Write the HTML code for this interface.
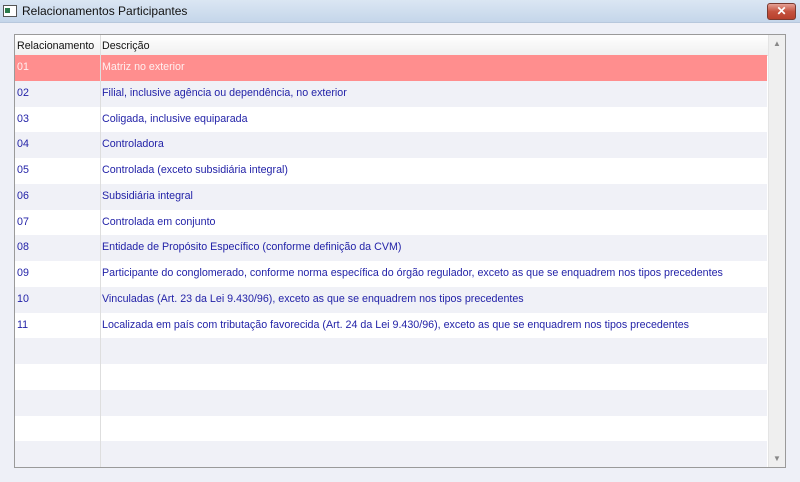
<!DOCTYPE html>
<html><head><style>
body{margin:0;width:800px;height:482px;background:#eef0f7;font-family:"Liberation Sans",sans-serif;font-size:10.7px;position:relative;overflow:hidden}
.title{position:absolute;left:0;top:0;width:800px;height:22px;background:linear-gradient(#dbe6f3,#c5d6ea);border-bottom:1px solid #b7c8dd}
.title span{position:absolute;left:22px;top:4px;font-size:12px;color:#111}
.ico{position:absolute;left:3px;top:5px;width:12px;height:10px;border:1px solid #555;background:#fff}
.ico:before{content:"";position:absolute;left:1px;top:2px;width:5px;height:5px;background:#2a7a4a}
.close{position:absolute;left:767px;top:3px;width:27px;height:15px;border-radius:3px;background:linear-gradient(#e5a196,#c5523e 50%,#b7402c);border:1px solid #7a3a30;color:#fff;font-weight:bold;text-align:center;line-height:15px;font-size:12px}
.grid{position:absolute;left:14px;top:34px;width:770px;height:432px;border:1px solid #9a9a9a;background:#fff;overflow:hidden}
.hdr{position:absolute;left:0;top:0;width:754px;height:20px;background:linear-gradient(#fff,#f0f0f0);border-bottom:1px solid #ddd}
.hdr div{position:absolute;top:5px;color:#111}
.row{position:absolute;left:0;width:752px;height:25.75px}
.row div{position:absolute;top:6px;color:#2323a8}
.c1{left:2px}.c2{left:87px}
.g{background:#f0f1f7}.w{background:#fff}
.sel{background:#ff8e8e}.sel div{color:#fff0f0}
.vline{position:absolute;left:85px;top:0;width:1px;height:432px;background:#dedede}
.sb{position:absolute;left:753px;top:0;width:17px;height:432px;background:#efefef;border-left:1px solid #e4e4e4}
.sb span{position:absolute;left:4px;color:#888;font-size:8px}
</style></head><body>
<div class="title"><div class="ico"></div><span>Relacionamentos Participantes</span></div>
<div class="close">✕</div>
<div class="grid">
<div class="hdr"><div style="left:2px">Relacionamento</div><div style="left:87px">Descrição</div></div>
<div class="row sel" style="top:20px"><div class="c1">01</div><div class="c2">Matriz no exterior</div></div>
<div class="row g" style="top:45.75px"><div class="c1">02</div><div class="c2">Filial, inclusive agência ou dependência, no exterior</div></div>
<div class="row w" style="top:71.5px"><div class="c1">03</div><div class="c2">Coligada, inclusive equiparada</div></div>
<div class="row g" style="top:97.25px"><div class="c1">04</div><div class="c2">Controladora</div></div>
<div class="row w" style="top:123px"><div class="c1">05</div><div class="c2">Controlada (exceto subsidiária integral)</div></div>
<div class="row g" style="top:148.75px"><div class="c1">06</div><div class="c2">Subsidiária integral</div></div>
<div class="row w" style="top:174.5px"><div class="c1">07</div><div class="c2">Controlada em conjunto</div></div>
<div class="row g" style="top:200.25px"><div class="c1">08</div><div class="c2">Entidade de Propósito Específico (conforme definição da CVM)</div></div>
<div class="row w" style="top:226px"><div class="c1">09</div><div class="c2">Participante do conglomerado, conforme norma específica do órgão regulador, exceto as que se enquadrem nos tipos precedentes</div></div>
<div class="row g" style="top:251.75px"><div class="c1">10</div><div class="c2">Vinculadas (Art. 23 da Lei 9.430/96), exceto as que se enquadrem nos tipos precedentes</div></div>
<div class="row w" style="top:277.5px"><div class="c1">11</div><div class="c2">Localizada em país com tributação favorecida (Art. 24 da Lei 9.430/96), exceto as que se enquadrem nos tipos precedentes</div></div>
<div class="row g" style="top:303.25px"></div>
<div class="row w" style="top:329px"></div>
<div class="row g" style="top:354.75px"></div>
<div class="row w" style="top:380.5px"></div>
<div class="row g" style="top:406.25px"></div>
<div class="vline"></div>
<div class="sb"><span style="top:4px">▲</span><span style="top:419px">▼</span></div>
</div>
</body></html>
